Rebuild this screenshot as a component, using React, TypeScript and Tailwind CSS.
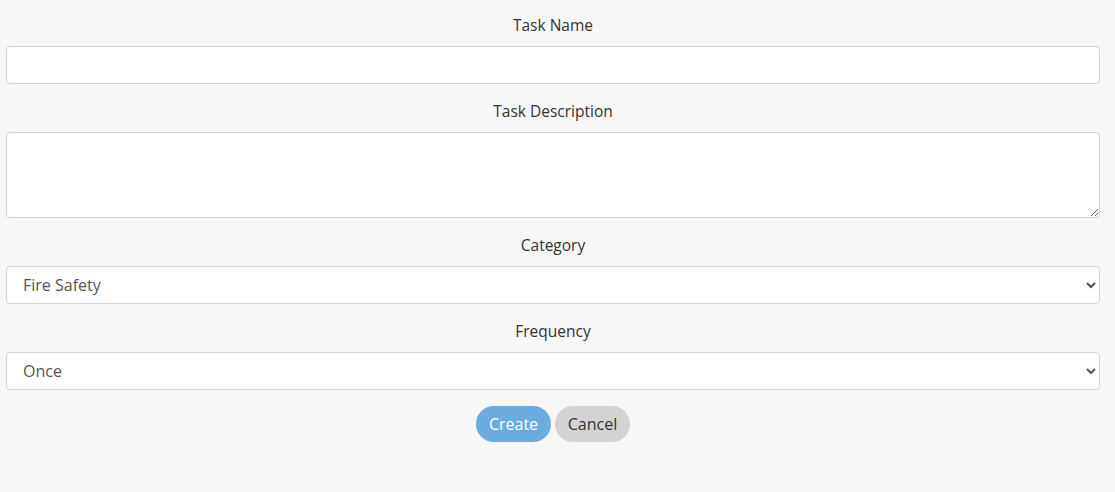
import React, { useState } from 'react';

const fieldClass =
  'block w-full rounded-[4px] border border-[#ced4da] bg-white text-[16px] text-[#555] outline-none';

const labelClass = 'mb-[9px] block h-6 text-center text-[15.5px] leading-6 text-[#333]';

const App: React.FC = () => {
  const [name, setName] = useState('');
  const [description, setDescription] = useState('');
  const [category, setCategory] = useState('Fire Safety');
  const [frequency, setFrequency] = useState('Once');

  return (
    <div
      className="min-h-[492px] w-full bg-[#f7f7f7] pl-[6px] pr-[15px] pt-[13px]"
      style={{ fontFamily: '"Open Sans", "Liberation Sans", sans-serif' }}
    >
      <form className="flex flex-col" onSubmit={(e) => e.preventDefault()}>
        <label className={labelClass}>Task Name</label>
        <input
          type="text"
          value={name}
          onChange={(e) => setName(e.target.value)}
          className={`${fieldClass} h-[38px] px-4`}
        />

        <label className={`${labelClass} mt-[15px]`}>Task Description</label>
        <textarea
          value={description}
          onChange={(e) => setDescription(e.target.value)}
          className={`${fieldClass} h-[86px] px-4 py-2`}
        />

        <label className={`${labelClass} mt-[15px]`}>Category</label>
        <select
          value={category}
          onChange={(e) => setCategory(e.target.value)}
          className={`${fieldClass} h-[38px] pl-3 pr-2`}
        >
          <option>Fire Safety</option>
          <option>Electrical</option>
          <option>Plumbing</option>
          <option>General</option>
        </select>

        <label className={`${labelClass} mt-[15px]`}>Frequency</label>
        <select
          value={frequency}
          onChange={(e) => setFrequency(e.target.value)}
          className={`${fieldClass} h-[38px] pl-3 pr-2`}
        >
          <option>Once</option>
          <option>Daily</option>
          <option>Weekly</option>
          <option>Monthly</option>
        </select>

        <div className="mt-4 flex justify-center gap-1">
          <button
            type="submit"
            className="h-9 w-[75px] rounded-full bg-[#6aacde] text-[16px] text-white"
          >
            Create
          </button>
          <button
            type="button"
            className="h-9 w-[75px] rounded-full bg-[#d3d3d3] text-[16px] text-[#333]"
          >
            Cancel
          </button>
        </div>
      </form>
    </div>
  );
};

export default App;
